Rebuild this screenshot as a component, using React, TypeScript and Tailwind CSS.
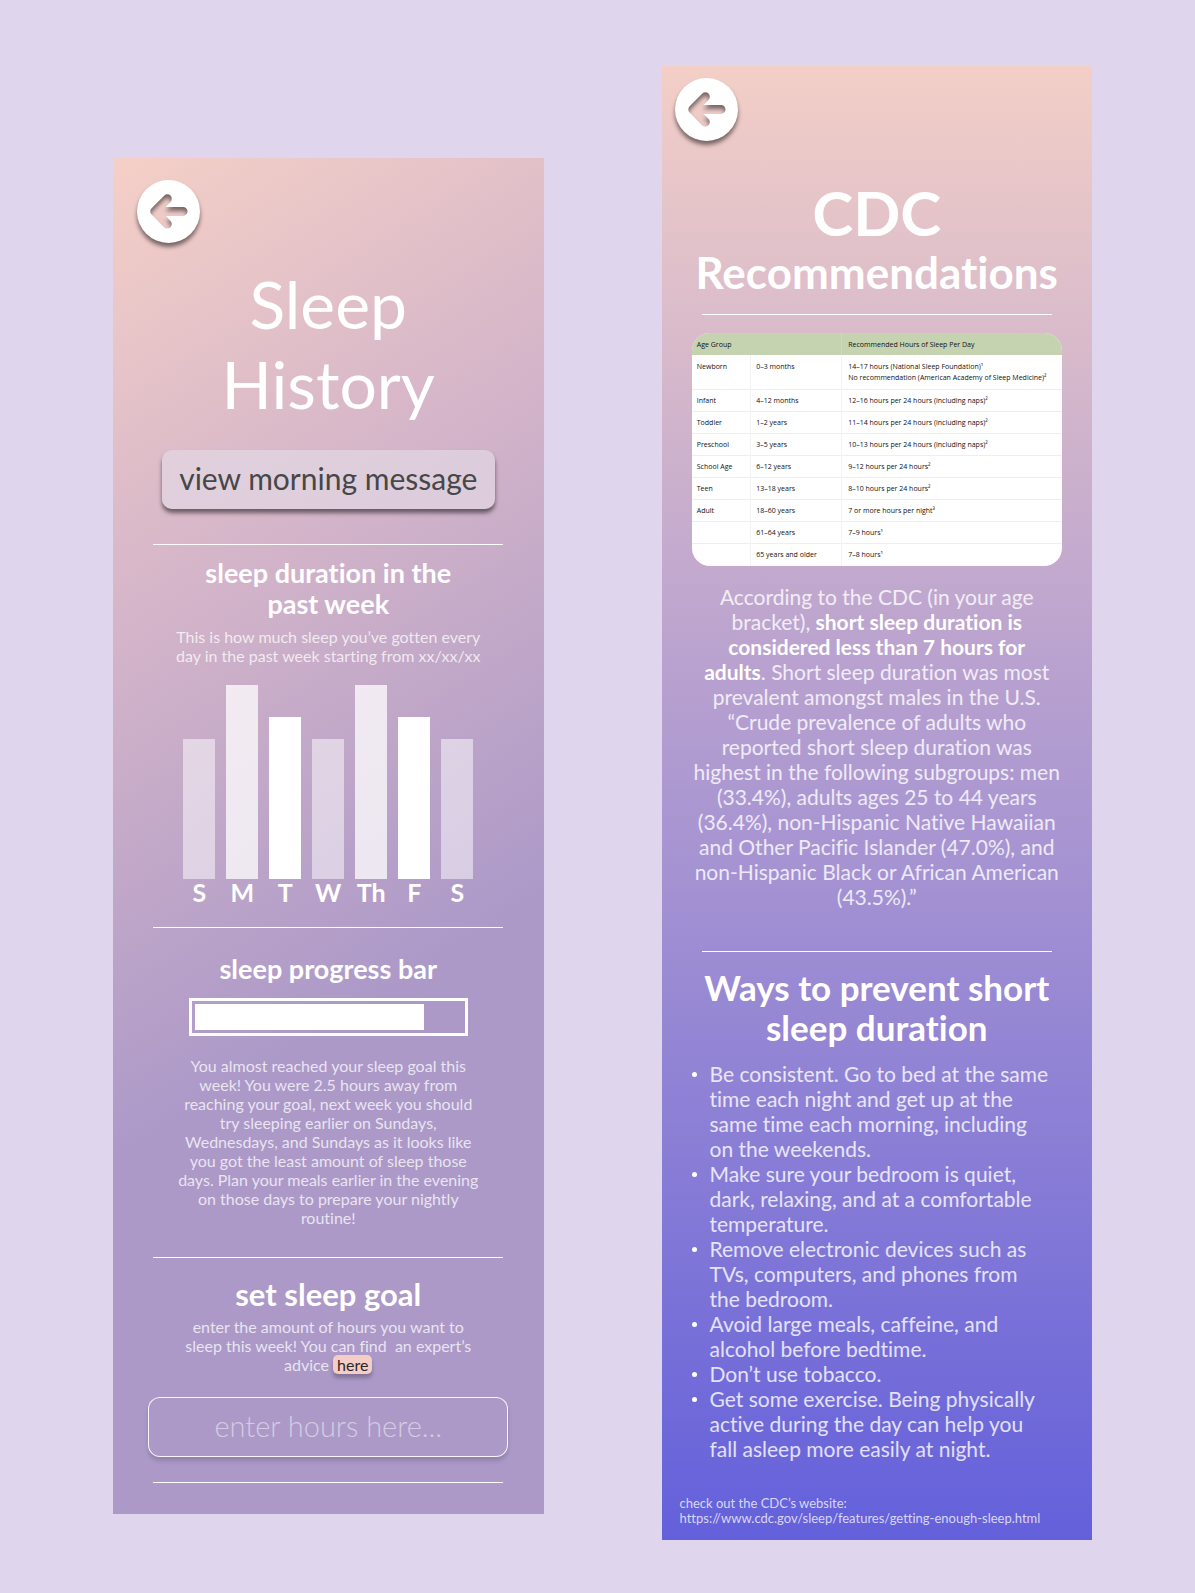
import { useId } from "react";
import type { ReactNode } from "react";

function Lines({ lines }: { lines: ReactNode[] }) {
  return (
    <>
      {lines.map((line, i) => (
        <span key={i} className="block whitespace-nowrap">
          {line}
        </span>
      ))}
    </>
  );
}

function BackButton() {
  const id = useId();
  return (
    <button type="button" aria-label="Back" className="block size-[63px] cursor-pointer rounded-full">
      <svg
        viewBox="0 0 63 63"
        className="size-full overflow-visible drop-shadow-[0_4px_2px_rgba(0,0,0,0.5)]"
        aria-hidden="true"
      >
        <mask id={id}>
          <rect width="63" height="63" fill="white" />
          <path
            d="M30.3 18.8 17.8 31.4 30.3 44M18.5 31.4H46"
            fill="none"
            stroke="black"
            strokeWidth="9"
            strokeLinecap="round"
            strokeLinejoin="round"
          />
        </mask>
        <circle cx="31.5" cy="31.5" r="31.5" fill="white" mask={`url(#${id})`} />
      </svg>
    </button>
  );
}

function Divider({ className }: { className: string }) {
  return <hr className={`w-[350px] self-center border-t border-white ${className}`} />;
}

const week = [
  { day: "S", bar: "h-[140px] bg-white/50" },
  { day: "M", bar: "h-[194px] bg-white/75" },
  { day: "T", bar: "h-[162px] bg-white" },
  { day: "W", bar: "h-[140px] bg-white/50" },
  { day: "Th", bar: "h-[194px] bg-white/75" },
  { day: "F", bar: "h-[162px] bg-white" },
  { day: "S", bar: "h-[140px] bg-white/50" },
];

function SleepHistory() {
  return (
    <section className="mt-[158px] flex min-w-0 flex-1 flex-col bg-[linear-gradient(148deg,#f5d0c7_0%,#d3b4c9_30%,#ac99c8_62%)] pt-[22px] pb-[31px] text-center">
      <div className="pl-6">
        <BackButton />
      </div>
      <h1 className="mt-[21px] mb-[-2px] text-[66px] leading-[80px] font-normal">
        <Lines lines={["Sleep", "History"]} />
      </h1>
      <button
        type="button"
        className="mt-7 h-[59px] w-[333px] self-center rounded-[10px] bg-[#e3d8e4]/70 pb-1 text-[30px] leading-[36px] text-[#474747] shadow-[0_4px_4px_rgba(0,0,0,0.5)]"
      >
        view morning message
      </button>
      <Divider className="mt-[35px]" />

      <h2 className="mt-3 text-[27px] leading-[31px] font-bold">
        <Lines lines={["sleep duration in the", "past week"]} />
      </h2>
      <p className="mt-2 text-[16px] leading-[19px] text-white/75">
        <Lines lines={["This is how much sleep you’ve gotten every", "day in the past week starting from xx/xx/xx"]} />
      </p>
      <div className="mt-5 flex items-end gap-[11px] self-center">
        {week.map(({ day, bar }, i) => (
          <div key={i} className="flex w-8 flex-col items-center">
            <div className={`w-full ${bar}`} />
            <span className="text-[25px] leading-[26px] font-bold">{day}</span>
          </div>
        ))}
      </div>
      <Divider className="mt-[22px]" />

      <h2 className="mt-[25px] text-[27px] leading-[31px] font-bold">sleep progress bar</h2>
      <div
        role="progressbar"
        aria-label="sleep progress"
        aria-valuenow={84}
        className="mt-[14px] h-[38px] w-[279px] self-center border-[3px] border-white p-[3px]"
      >
        <div className="h-full w-[229px] bg-white" />
      </div>
      <p className="mt-5 text-[16px] leading-[19px] text-white/75">
        <Lines
          lines={[
            "You almost reached your sleep goal this",
            "week! You were 2.5 hours away from",
            "reaching your goal, next week you should",
            "try sleeping earlier on Sundays,",
            "Wednesdays, and Sundays as it looks like",
            "you got the least amount of sleep those",
            "days. Plan your meals earlier in the evening",
            "on those days to prepare your nightly",
            "routine!",
          ]}
        />
      </p>
      <Divider className="mt-[30px]" />

      <h2 className="mt-[18px] text-[31px] leading-[36px] font-bold">
        <label htmlFor="goal">set sleep goal</label>
      </h2>
      <p className="mt-[5px] text-[16px] leading-[19px] text-white/75">
        <Lines
          lines={[
            "enter the amount of hours you want to",
            "sleep this week! You can find\u00a0 an expert’s",
            <>
              advice{" "}
              <a
                href="#cdc"
                className="inline-block rounded-[5px] bg-[#f3cdc6] px-1 text-[#2c2627] shadow-[0_4px_4px_rgba(0,0,0,0.25)]"
              >
                here
              </a>
            </>,
          ]}
        />
      </p>
      <input
        id="goal"
        type="text"
        placeholder="enter hours here..."
        className="mt-[23px] h-[60px] w-[360px] self-center rounded-[12px] border border-white/90 bg-[#ac99c8] pb-1 text-center text-[29px] font-light text-white shadow-[0_4px_4px_rgba(0,0,0,0.15)] placeholder:text-white/50"
      />
      <Divider className="mt-[25px]" />
    </section>
  );
}

const rows = [
  ["Infant", "4–12 months", "12–16 hours per 24 hours (including naps)²"],
  ["Toddler", "1–2 years", "11–14 hours per 24 hours (including naps)²"],
  ["Preschool", "3–5 years", "10–13 hours per 24 hours (including naps)²"],
  ["School Age", "6–12 years", "9–12 hours per 24 hours²"],
  ["Teen", "13–18 years", "8–10 hours per 24 hours²"],
  ["Adult", "18–60 years", "7 or more hours per night³"],
  ["", "61–64 years", "7–9 hours¹"],
  ["", "65 years and older", "7–8 hours¹"],
];

function SleepTable() {
  return (
    <div className="mt-[18px] w-[370px] self-center overflow-hidden rounded-[18px] bg-white">
      <table className="w-full table-fixed text-left font-['Open_Sans','Noto_Sans',sans-serif] text-[7px] leading-[11px] whitespace-nowrap text-[#111111]">
        <colgroup>
          <col className="w-[59px]" />
          <col className="w-[91px]" />
          <col />
        </colgroup>
        <thead>
          <tr className="h-[22px] bg-[#c5d3b1]">
            <th colSpan={2} className="border-r border-[#cdd9bc] pl-[5px] font-normal">
              Age Group
            </th>
            <th className="pl-[6px] font-normal">Recommended Hours of Sleep Per Day</th>
          </tr>
        </thead>
        <tbody>
          <tr className="h-[34px] border-b border-[#eeeeee] align-top">
            <td className="border-r border-[#f3f3f3] pt-[6px] pl-[5px]">Newborn</td>
            <td className="border-r border-[#f3f3f3] pt-[6px] pl-[5px]">0–3 months</td>
            <td className="pt-[6px] pl-[6px]">
              <Lines
                lines={[
                  "14–17 hours (National Sleep Foundation)¹",
                  "No recommendation (American Academy of Sleep Medicine)²",
                ]}
              />
            </td>
          </tr>
          {rows.map(([group, age, hours]) => (
            <tr key={age} className="h-[22px] border-b border-[#eeeeee] last:h-[23px] last:border-0">
              <td className="border-r border-[#f3f3f3] pl-[5px]">{group}</td>
              <td className="border-r border-[#f3f3f3] pl-[5px]">{age}</td>
              <td className="pl-[6px]">{hours}</td>
            </tr>
          ))}
        </tbody>
      </table>
    </div>
  );
}

const tips = [
  [
    "Be consistent. Go to bed at the same",
    "time each night and get up at the",
    "same time each morning, including",
    "on the weekends.",
  ],
  ["Make sure your bedroom is quiet,", "dark, relaxing, and at a comfortable", "temperature."],
  ["Remove electronic devices such as", "TVs, computers, and phones from", "the bedroom."],
  ["Avoid large meals, caffeine, and", "alcohol before bedtime."],
  ["Don’t use tobacco."],
  ["Get some exercise. Being physically", "active during the day can help you", "fall asleep more easily at night."],
];

function Recommendations() {
  return (
    <section
      id="cdc"
      className="mt-[66px] flex min-w-0 flex-1 flex-col bg-[linear-gradient(180deg,#f3cfc7_0%,#c1a8ce_35%,#6360db_100%)] pt-3 pb-[14px]"
    >
      <div className="pl-[13px]">
        <BackButton />
      </div>
      <h1 className="mt-9 text-center font-bold">
        <span className="block text-[62px] leading-[70px]">CDC</span>
        <span className="block text-[44px] leading-[50px]">Recommendations</span>
      </h1>
      <Divider className="mt-[17px]" />
      <SleepTable />
      <p className="mt-[18px] text-center text-[21px] leading-[25px] text-white/80">
        <Lines
          lines={[
            "According to the CDC (in your age",
            <>
              bracket), <strong className="font-bold text-white">short sleep duration is</strong>
            </>,
            <strong className="font-bold text-white">considered less than 7 hours for</strong>,
            <>
              <strong className="font-bold text-white">adults</strong>. Short sleep duration was most
            </>,
            "prevalent amongst males in the U.S.",
            "“Crude prevalence of adults who",
            "reported short sleep duration was",
            "highest in the following subgroups: men",
            "(33.4%), adults ages 25 to 44 years",
            "(36.4%), non-Hispanic Native Hawaiian",
            "and Other Pacific Islander (47.0%), and",
            "non-Hispanic Black or African American",
            "(43.5%).”",
          ]}
        />
      </p>
      <Divider className="mt-[42px]" />
      <h2 className="mt-[15px] text-center text-[35px] leading-[40px] font-bold">
        <Lines lines={["Ways to prevent short", "sleep duration"]} />
      </h2>
      <ul className="mt-[14px] pl-[30px] text-[21px] leading-[25px] text-white/80">
        {tips.map((tip) => (
          <li key={tip[0]} className="flex gap-[13px]">
            <span className="mt-[11px] size-[5px] shrink-0 rounded-full bg-white" />
            <span>
              <Lines lines={tip} />
            </span>
          </li>
        ))}
      </ul>
      <p className="mt-[35px] pl-[18px] text-[13px] leading-[15px] whitespace-nowrap text-white/75">
        check out the CDC’s website:
        <br />
        <a href="https://www.cdc.gov/sleep/features/getting-enough-sleep.html">
          https://www.cdc.gov/sleep/features/getting-enough-sleep.html
        </a>
      </p>
    </section>
  );
}

export default function App() {
  return (
    <main className="flex min-h-screen items-start gap-[118px] bg-[#dfd5ec] pr-[103px] pb-[53px] pl-[113px] font-['Lato',sans-serif] text-white [font-variant-ligatures:none]">
      <SleepHistory />
      <Recommendations />
    </main>
  );
}
